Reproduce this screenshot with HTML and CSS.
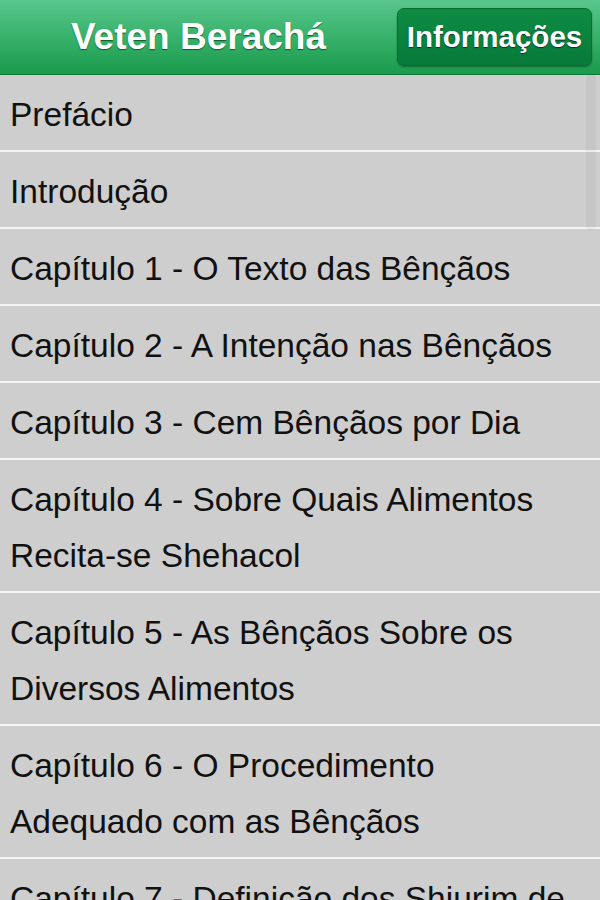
FILE: index.html
```html
<!DOCTYPE html>
<html lang="pt">
<head>
<meta charset="utf-8">
<title>Veten Berachá</title>
<link rel="stylesheet" href="styles.css">
</head>
<body>
<header class="bar">
  <h1 class="title">Veten Berachá</h1>
  <button class="info">Informações</button>
</header>
<div class="list-wrap">
  <ul class="list">
    <li>Prefácio</li>
    <li>Introdução</li>
    <li>Capítulo 1 - O Texto das Bênçãos</li>
    <li>Capítulo 2 - A Intenção nas Bênçãos</li>
    <li>Capítulo 3 - Cem Bênçãos por Dia</li>
    <li>Capítulo 4 - Sobre Quais Alimentos Recita-se Shehacol</li>
    <li>Capítulo 5 - As Bênçãos Sobre os Diversos Alimentos</li>
    <li>Capítulo 6 - O Procedimento Adequado com as Bênçãos</li>
    <li>Capítulo 7 - Definição dos Shiurim de Alimentos</li>
  </ul>
  <div class="scroll"></div>
</div>
</body>
</html>
```

FILE: styles.css
```css
html, body {
  margin: 0;
  padding: 0;
  background: #cecece;
  font-family: "Liberation Sans", Arial, sans-serif;
  overflow: hidden;
  height: 900px;
}
.bar {
  height: 74px;
  border-bottom: 1px solid #0d7a3a;
  background: linear-gradient(to bottom, #5ac68c 0%, #3ab46e 45%, #1a9a4c 100%);
  display: flex;
  align-items: center;
  padding: 0 8px 0 0;
}
.title {
  flex: 1;
  margin: 0;
  text-align: center;
  color: #fff;
  font-size: 37px;
  font-weight: bold;
  text-shadow: 0 1px 1px #0a5a2a;
}
.info {
  height: 58px;
  width: 195px;
  border: 1px solid #0a6a32;
  border-radius: 7px;
  background: linear-gradient(to bottom, #0e8c44, #077a38);
  box-shadow: 0 1px 2px rgba(0,0,0,0.35);
  color: #fff;
  font-family: "Liberation Sans", Arial, sans-serif;
  font-weight: bold;
  font-size: 29.5px;
  text-shadow: 0 1px 1px #033;
  padding: 0;
}
.list-wrap {
  position: relative;
}
.list {
  list-style: none;
  margin: 0;
  padding: 0;
}
.list li {
  font-size: 33.5px;
  line-height: 56px;
  color: #111;
  padding: 12px 20px 7px 10px;
  border-bottom: 2px solid #f4f4f4;
}
.scroll {
  position: absolute;
  top: 0;
  right: 4px;
  width: 10px;
  height: 155px;
  background: rgba(0,0,0,0.035);
  border-radius: 4px;
}
```
